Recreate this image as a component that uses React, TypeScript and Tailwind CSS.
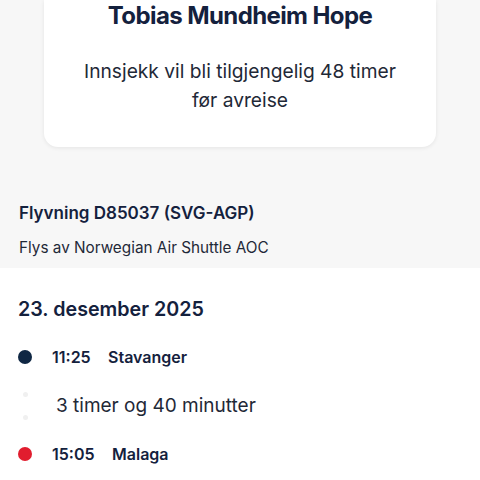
import React from 'react';

const App: React.FC = () => {
    return (
        <div className="w-[480px] h-[480px] overflow-hidden bg-white font-['Inter',sans-serif] text-[#14213d]">
            <div className="bg-[#f7f7f7] pb-[10px]">
                <div className="px-[44px]">
                    <div className="bg-white rounded-b-[14px] shadow-[0_1px_4px_rgba(0,0,0,0.08)] pt-[1px] pb-[32px] text-center">
                        <h1 className="text-[24px] font-bold leading-[30px] tracking-[-0.6px]">Tobias Mundheim Hope</h1>
                        <p className="mt-[26px] text-[19.2px] leading-[29px] text-[#1f2937]">
                            Innsjekk vil bli tilgjengelig 48 timer
                            <br />
                            før avreise
                        </p>
                    </div>
                </div>
                <div className="px-[19px] pt-[54px]">
                    <h2 className="text-[17px] font-semibold leading-[24px]">Flyvning D85037 (SVG-AGP)</h2>
                    <p className="mt-[13px] text-[15.3px] leading-[20px] text-[#1f2937]">Flys av Norwegian Air Shuttle AOC</p>
                </div>
            </div>
            <div className="px-[18px] pt-[27px]">
                <h2 className="text-[19.7px] font-semibold leading-[28px]">23. desember 2025</h2>
                <div className="mt-[22px]">
                    <div className="flex items-center h-[24px]">
                        <span className="w-[14px] h-[14px] rounded-full bg-[#0f2744]" />
                        <span className="ml-[20px] text-[16px] font-semibold w-[56px]">11:25</span>
                        <span className="text-[16px] font-semibold">Stavanger</span>
                    </div>
                    <div className="flex items-center h-[73px]">
                        <div className="w-[14px] flex flex-col items-center gap-[18px]">
                            <span className="w-[5px] h-[5px] rounded-full bg-[#f0f0f0]" />
                            <span className="w-[5px] h-[5px] rounded-full bg-[#f0f0f0]" />
                        </div>
                        <span className="ml-[24px] pt-[2px] text-[19px] text-[#1f2937]">3 timer og 40 minutter</span>
                    </div>
                    <div className="flex items-center h-[24px]">
                        <span className="w-[14px] h-[14px] rounded-full bg-[#e11d2e]" />
                        <span className="ml-[20px] text-[16px] font-semibold w-[60px]">15:05</span>
                        <span className="text-[16px] font-semibold">Malaga</span>
                    </div>
                </div>
            </div>
        </div>
    );
};

export default App;
